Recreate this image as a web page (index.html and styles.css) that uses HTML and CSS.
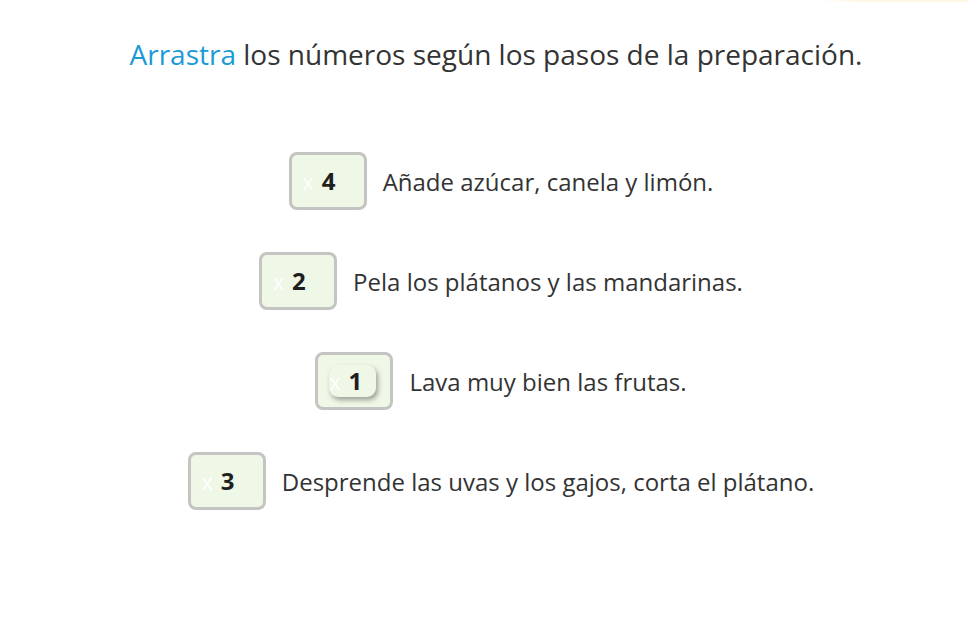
FILE: index.html
```html
<!DOCTYPE html>
<html lang="es">
<head>
<meta charset="utf-8">
<title>Arrastra</title>
<link rel="stylesheet" href="styles.css">
</head>
<body>
<div class="topline"></div>
<main class="page">
  <p class="title"><span class="accent">Arrastra</span> los números según los pasos de la preparación.</p>
  <div class="steps">
    <div class="step">
      <div class="slot"><div class="chip"><span class="x">x</span><span class="num">4</span></div></div>
      <span class="label">Añade azúcar, canela y limón.</span>
    </div>
    <div class="step">
      <div class="slot"><div class="chip"><span class="x">x</span><span class="num">2</span></div></div>
      <span class="label">Pela los plátanos y las mandarinas.</span>
    </div>
    <div class="step">
      <div class="slot"><div class="chip raised"><span class="x">x</span><span class="num">1</span></div></div>
      <span class="label">Lava muy bien las frutas.</span>
    </div>
    <div class="step">
      <div class="slot"><div class="chip"><span class="x">x</span><span class="num">3</span></div></div>
      <span class="label">Desprende las uvas y los gajos, corta el plátano.</span>
    </div>
  </div>
</main>
</body>
</html>
```
FILE: styles.css
```css
html, body {
  margin: 0;
  padding: 0;
  background: #ffffff;
}
body {
  font-family: "Open Sans", "Noto Sans", sans-serif;
  color: #333333;
  width: 968px;
  height: 628px;
  overflow: hidden;
  position: relative;
}
.topline {
  position: absolute;
  top: 0;
  right: 0;
  width: 150px;
  height: 2px;
  background: linear-gradient(to right, rgba(255,248,225,0), #fdf6e3 30%, #fdf6e3);
}
.page {
  padding-top: 34px;
}
.title {
  margin: 0;
  text-align: center;
  font-size: 28px;
  line-height: 40px;
  color: #333333;
  padding-left: 24px;
}
.accent {
  color: #1a9ad6;
}
.steps {
  display: flex;
  flex-direction: column;
  align-items: center;
  gap: 42px;
  margin-top: 78px;
  padding-left: 34px;
}
.step {
  display: flex;
  align-items: center;
  gap: 16px;
}
.slot {
  flex: none;
  box-sizing: border-box;
  width: 78px;
  height: 58px;
  border: 3px solid #c4c4c2;
  border-radius: 8px;
  background: #eff7e6;
  display: flex;
  align-items: center;
  padding-left: 11px;
}
.chip {
  flex: none;
  box-sizing: border-box;
  height: 32px;
  width: 47px;
  border-radius: 9px;
  display: flex;
  align-items: baseline;
  padding-top: 1px;
  gap: 8px;
}
.chip.raised {
  background: #eff7e6;
  box-shadow: 2px 3px 5px rgba(0, 0, 0, 0.35);
}
.x {
  color: #ffffff;
  font-size: 21px;
  line-height: 30px;
}
.num {
  font-weight: 700;
  font-size: 24px;
  color: #1f1f1f;
  line-height: 30px;
}
.label {
  font-size: 24px;
  color: #333333;
  white-space: nowrap;
}
```
